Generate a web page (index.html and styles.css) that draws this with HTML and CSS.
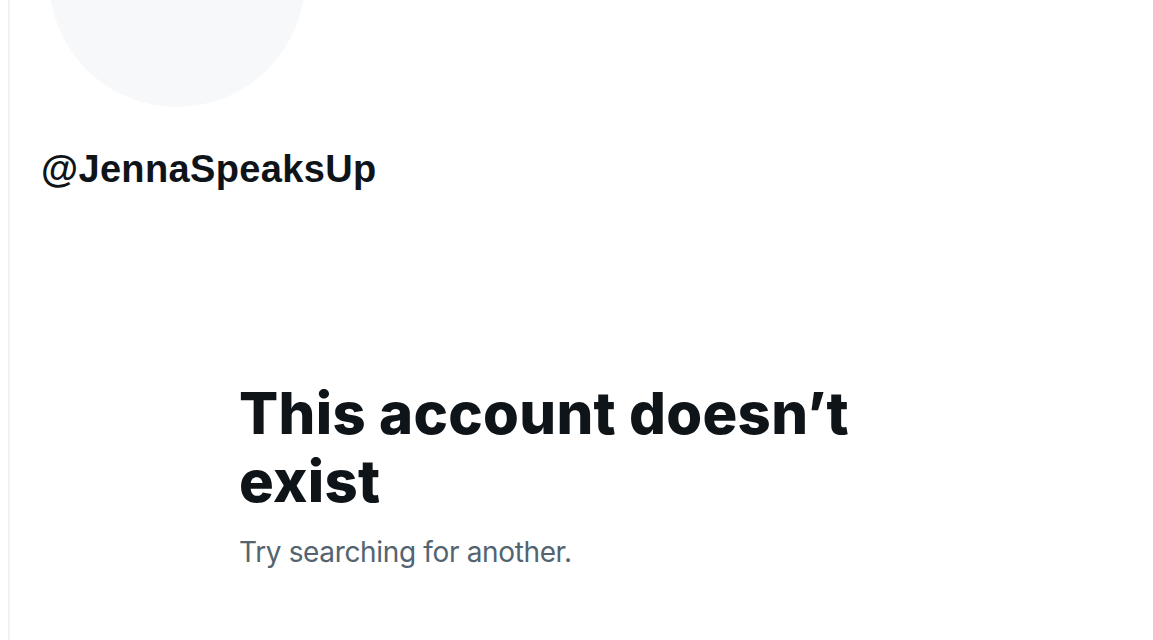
FILE: index.html
```html
<!DOCTYPE html>
<html lang="en">
<head>
<meta charset="utf-8">
<title>@JennaSpeaksUp</title>
<link rel="stylesheet" href="styles.css">
</head>
<body>
<main class="profile">
  <div class="avatar"></div>
  <div class="handle">@JennaSpeaksUp</div>
  <section class="empty-state">
    <h1 class="empty-title">This account doesn’t exist</h1>
    <p class="empty-sub">Try searching for another.</p>
  </section>
</main>
</body>
</html>
```

FILE: styles.css
```css
html, body {
  margin: 0;
  padding: 0;
  background: #ffffff;
  overflow: hidden;
}

.profile {
  display: flex;
  flex-direction: column;
  align-items: flex-start;
  margin-left: 8px;
  border-left: 2px solid #eff1f2;
  height: 100vh;
  box-sizing: border-box;
}

.avatar {
  flex: none;
  width: 256px;
  height: 256px;
  border-radius: 50%;
  background: #f7f8f9;
  margin-top: -149px;
  margin-left: 39px;
}

.handle {
  margin-top: 40px;
  margin-left: 31px;
  font-family: "Liberation Sans", Arial, sans-serif;
  font-weight: 700;
  font-size: 38px;
  line-height: 44px;
  letter-spacing: 0.35px;
  color: #0f1419;
}

.empty-state {
  margin-top: 188px;
  padding-left: 229px;
  width: 640px;
}

.empty-title {
  margin: 0;
  font-family: "Inter", "Liberation Sans", sans-serif;
  font-weight: 800;
  font-size: 58px;
  line-height: 68px;
  letter-spacing: 0.3px;
  color: #0f1419;
}

.empty-sub {
  margin: 20px 0 0;
  font-family: "Inter", "Liberation Sans", sans-serif;
  font-weight: 400;
  font-size: 28px;
  line-height: 34px;
  letter-spacing: -0.35px;
  color: #536471;
}
```
